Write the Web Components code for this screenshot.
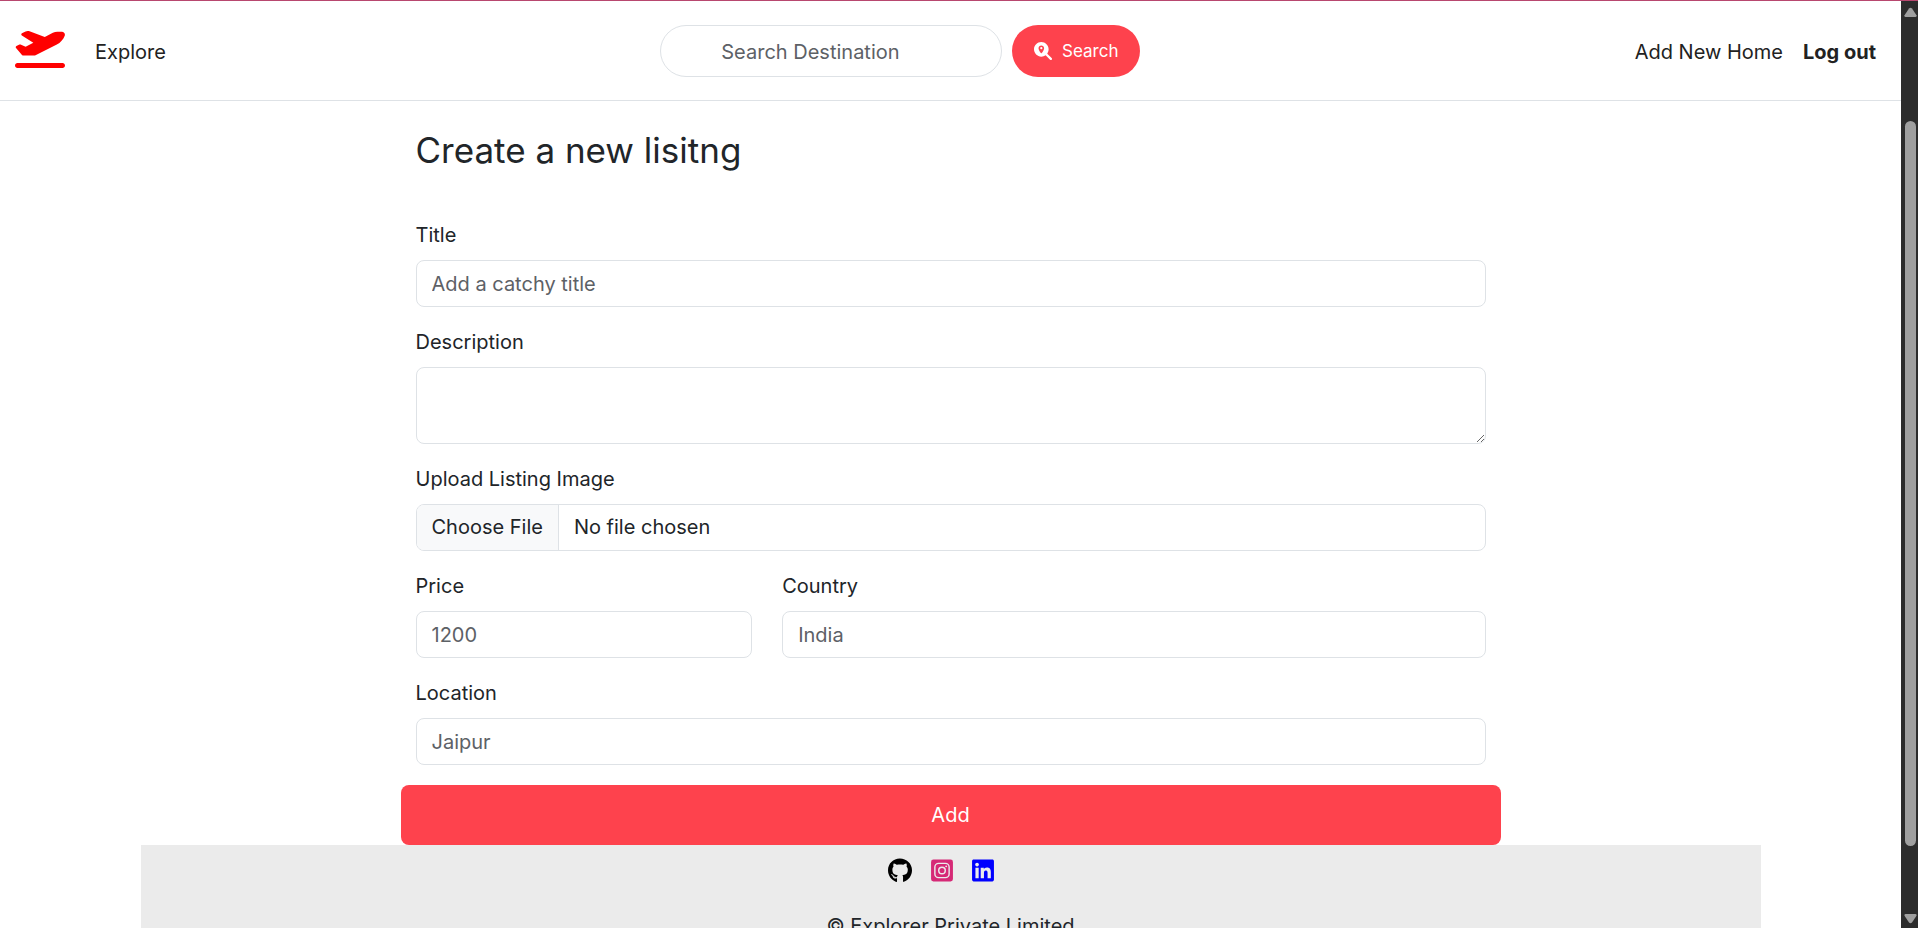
<!DOCTYPE html>
<html lang="en">
<head>
<meta charset="utf-8">
<meta name="viewport" content="width=device-width, initial-scale=1">
<title>Create a new listing</title>
<style>
  html, body { margin: 0; height: 100%; }
  body {
    overflow: hidden;
    background: #fff;
    color: #212529;
    font: 400 20px/30px Inter, "Open Sans", sans-serif;
    --accent: #fe424d;
    --line: #dee2e6;
    --muted: #5d6166;
  }
</style>
</head>
<body>
<app-shell>
  <site-nav slot="top"></site-nav>
  <listing-form>
    <form-field label="Title" placeholder="Add a catchy title"></form-field>
    <form-field label="Description" kind="textarea"></form-field>
    <form-field label="Upload Listing Image" kind="file"></form-field>
    <form-field class="third" label="Price" placeholder="1200"></form-field>
    <form-field class="rest" label="Country" placeholder="India"></form-field>
    <form-field label="Location" placeholder="Jaipur"></form-field>
  </listing-form>
  <site-footer></site-footer>
</app-shell>

<template id="shell-tpl">
  <style>
    :host { display: flex; flex-direction: column; height: 100vh; border-top: 1px solid #b8476f; box-sizing: border-box; }
    .row { flex: 1; min-height: 0; display: flex; }
    .page { flex: 1; min-width: 0; overflow: hidden; }
  </style>
  <div class="row">
    <div class="page"><slot name="top"></slot><main><slot></slot></main></div>
    <scroll-rail></scroll-rail>
  </div>
</template>

<template id="rail-tpl">
  <style>
    :host { display: flex; flex-direction: column; align-items: center; flex: none; width: 17px; background: #2c2c2c; box-sizing: border-box; padding: 6px 0 4px 2px; }
    svg { display: block; width: 13px; height: 10px; fill: #9f9f9f; flex: none; }
    .track { flex: 1; display: flex; flex-direction: column; padding: 104px 0 68px; }
    .thumb { flex: 1; width: 11px; border-radius: 6px; background: #9f9f9f; }
  </style>
  <svg viewBox="0 0 13 10" aria-hidden="true"><path d="M5 1.6Q6.500 0 8 1.600L12.500 8.200Q13 10 11.500 10H1.500Q0 10 .5 8.200Z"/></svg>
  <div class="track"><div class="thumb"></div></div>
  <svg viewBox="0 0 13 10" aria-hidden="true"><path d="M5 8.400Q6.500 10 8 8.400L12.500 1.800Q13 0 11.500 0H1.500Q0 0 .5 1.800Z"/></svg>
</template>

<template id="nav-tpl">
  <style>
    :host { display: block; border-bottom: 1px solid var(--line); }
    nav { display: flex; align-items: center; justify-content: space-between; height: 99px; padding: 0 15px; box-sizing: border-box; }
    .group { display: flex; align-items: center; }
    a { color: #222; text-decoration: none; padding: 2px 10px 0; white-space: nowrap; }
    .logo { padding: 0; margin-right: 20px; }
    .logo svg { display: block; width: 50px; height: 40px; fill: red; margin-bottom: 5px; }
    .strong { font-weight: 700; }
    form { display: flex; gap: 10px; margin: 0; }
    input { box-sizing: border-box; width: 342px; height: 52px; padding: 2px 15px 0 60px; border: 1px solid var(--line); border-radius: 26px; font: inherit; color: inherit; background: #fff; outline: 0; }
    input::placeholder { color: var(--muted); opacity: 1; }
    button { display: flex; align-items: center; justify-content: center; gap: 10px; width: 128px; height: 52px; padding: 0; border: 0; border-radius: 26px; background: var(--accent); color: #fff; font: inherit; font-size: 17px; }
    button svg { width: 18px; height: 18px; fill: #fff; }
  </style>
  <nav>
    <div class="group">
      <a class="logo" href="#" aria-label="Home"><svg viewBox="0 0 640 512"><path d="M381 114.900L186.100 41.800c-16.700-6.200-35.200-5.300-51.100 2.700L89.100 67.400C78 73 77.200 88.500 87.600 95.200l146.900 94.500L136 240 77.800 214.100c-8.700-3.900-18.800-3.700-27.300.6L18.300 230.800c-9.300 4.700-11.800 16.800-5 24.700l73.100 85.300c6.100 7.100 15 11.200 24.300 11.200H248.400c5 0 9.900-1.200 14.300-3.400L535.600 212.200c46.500-23.300 82.500-63.300 100.800-112C645.900 75 627.200 48 600.200 48H542.800c-20.200 0-40.200 4.800-58.200 14L381 114.900zM0 480c0 17.700 14.300 32 32 32H608c17.700 0 32-14.300 32-32s-14.300-32-32-32H32c-17.700 0-32 14.300-32 32z"/></svg></a>
      <a href="#">Explore</a>
    </div>
    <form>
      <input type="text" aria-label="Search Destination" placeholder="Search Destination">
      <button type="button"><svg viewBox="0 0 512 512" aria-hidden="true"><path d="M416 208c0 45.900-14.900 88.300-40 122.700L502.600 457.400c12.500 12.500 12.500 32.800 0 45.300s-32.800 12.500-45.300 0L330.700 376c-34.400 25.200-76.800 40-122.700 40C93.100 416 0 322.900 0 208S93.100 0 208 0S416 93.100 416 208zM288 176c0-44.200-35.800-80-80-80s-80 35.800-80 80c0 48.800 46.500 111.600 68.600 138.600c6 7.300 16.800 7.300 22.700 0c22.100-27 68.600-89.800 68.600-138.600zm-112 0a32 32 0 1 1 64 0 32 32 0 1 1 -64 0z"/></svg>Search</button>
    </form>
    <div class="group">
      <a href="#">Add New Home</a>
      <a class="strong" href="#">Log out</a>
    </div>
  </nav>
</template>

<template id="form-tpl">
  <style>
    :host { display: block; max-width: 1100px; margin: 0 auto; }
    h1 { margin: 0; padding: 25px 15px 46px; font-size: 35px; line-height: 48px; font-weight: 400; }
    form { margin: 0; }
    .fields { display: grid; grid-template-columns: repeat(12, minmax(0, 1fr)); gap: 20px 30px; padding: 0 15px 20px; }
    ::slotted(form-field) { grid-column: span 12; }
    ::slotted(.third) { grid-column: span 4; }
    ::slotted(.rest) { grid-column: span 8; }
    button { display: block; width: 100%; height: 60px; border: 0; border-radius: 8px; background: var(--accent); color: #fff; font: inherit; }
  </style>
  <h1>Create a new lisitng</h1>
  <form>
    <div class="fields"><slot></slot></div>
    <button type="button">Add</button>
  </form>
</template>

<template id="field-tpl">
  <style>
    :host { display: flex; flex-direction: column; gap: 10px; }
    label { align-self: flex-start; }
    input, textarea { display: block; box-sizing: border-box; width: 100%; height: 47px; margin: 0; padding: 0 15px; border: 1px solid var(--line); border-radius: 8px; background: #fff; color: inherit; font: inherit; outline: 0; }
    textarea { height: 77px; padding: 7px 15px; resize: vertical; }
    ::placeholder { color: var(--muted); opacity: 1; }
    input[type=file] { overflow: hidden; line-height: 45px; }
    ::file-selector-button { height: 45px; margin: 0 15px 0 -15px; padding: 0 15px; border: 0 solid var(--line); border-right-width: 1px; background: #f8f9fa; color: inherit; font: inherit; }
  </style>
  <label for="control"></label>
</template>

<template id="footer-tpl">
  <style>
    :host { display: flex; flex-direction: column; align-items: center; gap: 28px; box-sizing: border-box; width: calc(100% - 30px); max-width: 1620px; margin: 0 auto; padding: 13px 0 40px; background: #ebebeb; }
    .icons { display: flex; gap: 19px; padding-right: 20px; }
    a { display: block; height: 25px; }
    svg { display: block; height: 25px; width: 22px; }
    .gh svg { width: 24px; }
  </style>
  <div class="icons">
    <a class="gh" href="#" aria-label="GitHub"><svg viewBox="0 0 496 512"><path d="M165.900 397.400c0 2-2.300 3.600-5.200 3.600-3.300.3-5.600-1.300-5.600-3.600 0-2 2.300-3.600 5.200-3.600 3-.3 5.600 1.300 5.600 3.600zm-31.100-4.500c-.7 2 1.300 4.300 4.300 4.900 2.600 1 5.600 0 6.200-2s-1.300-4.300-4.300-5.200c-2.600-.7-5.500.3-6.200 2.300zm44.200-1.700c-2.900.7-4.900 2.600-4.600 4.900.3 2 2.900 3.300 5.900 2.600 2.900-.7 4.900-2.600 4.600-4.600-.3-1.900-3-3.200-5.900-2.900zM244.800 8C106.100 8 0 113.300 0 252c0 110.900 69.800 205.800 169.500 239.200 12.800 2.300 17.300-5.600 17.300-12.100 0-6.200-.3-40.400-.3-61.400 0 0-70 15-84.700-29.800 0 0-11.400-29.100-27.800-36.600 0 0-22.900-15.700 1.600-15.400 0 0 24.900 2 38.600 25.800 21.900 38.600 58.600 27.500 72.900 20.900 2.300-16 8.800-27.100 16-33.700-55.900-6.200-112.300-14.300-112.300-110.500 0-27.500 7.600-41.300 23.600-58.900-2.600-6.500-11.100-33.300 2.600-67.900 20.900-6.500 69 27 69 27 20-5.600 41.500-8.500 62.800-8.500s42.800 2.900 62.800 8.500c0 0 48.100-33.600 69-27 13.700 34.700 5.200 61.400 2.600 67.900 16 17.700 25.800 31.500 25.800 58.900 0 96.500-58.900 104.200-114.800 110.500 9.200 7.900 17 22.900 17 46.400 0 33.700-.3 75.400-.3 83.600 0 6.500 4.600 14.400 17.300 12.100C428.200 457.800 496 362.900 496 252 496 113.300 383.500 8 244.800 8zM97.200 352.900c-1.300 1-1 3.300.7 5.200 1.600 1.600 3.900 2.300 5.200 1 1.300-1 1-3.300-.7-5.200-1.600-1.600-3.900-2.300-5.200-1zm-10.800-8.100c-.7 1.300.3 2.900 2.300 3.900 1.600 1 3.600.7 4.300-.7.7-1.300-.3-2.900-2.300-3.900-2-.6-3.600-.3-4.300.7zm32.400 35.600c-1.600 1.300-1 4.300 1.300 6.200 2.300 2.300 5.200 2.600 6.500 1 1.300-1.300.7-4.300-1.300-6.200-2.200-2.300-5.200-2.600-6.500-1zm-11.400-14.700c-1.600 1-1.600 3.600 0 5.900 1.600 2.300 4.300 3.300 5.600 2.300 1.600-1.300 1.600-3.900 0-6.200-1.400-2.300-4-3.300-5.600-2z"/></svg></a>
    <a href="#" aria-label="Instagram"><svg viewBox="0 0 448 512"><rect y="32" width="448" height="448" rx="48" fill="#d62976"/><rect x="78" y="110" width="292" height="292" rx="76" fill="none" stroke="#ebebeb" stroke-width="29"/><circle cx="224" cy="256" r="67" fill="none" stroke="#ebebeb" stroke-width="30"/><circle cx="309" cy="171" r="19" fill="#ebebeb"/></svg></a>
    <a href="#" aria-label="LinkedIn"><svg viewBox="0 0 448 512"><path fill="#00f" d="M416 32H31.900C14.300 32 0 46.500 0 64.300v383.400C0 465.500 14.300 480 31.900 480H416c17.600 0 32-14.500 32-32.300V64.300c0-17.800-14.400-32.300-32-32.300zM135.400 416H69V202.200h66.500V416zm-33.200-243c-21.300 0-38.500-17.300-38.500-38.500S80.900 96 102.200 96c21.200 0 38.500 17.300 38.500 38.500 0 21.300-17.200 38.500-38.500 38.500zm282.100 243h-66.400V312c0-24.800-.5-56.700-34.500-56.700-34.600 0-39.900 27-39.900 54.900V416h-66.400V202.200h63.700v29.200h.9c8.900-16.800 30.600-34.500 62.900-34.500 67.200 0 79.700 44.300 79.700 101.900V416z"/></svg></a>
  </div>
  <div>© Explorer Private Limited</div>
</template>

<script>
  class TemplateElement extends HTMLElement {
    constructor() {
      super();
      const tpl = document.getElementById(this.constructor.template);
      this.attachShadow({ mode: 'open' }).append(tpl.content.cloneNode(true));
    }
  }

  customElements.define('scroll-rail', class extends TemplateElement { static template = 'rail-tpl'; });
  customElements.define('app-shell', class extends TemplateElement { static template = 'shell-tpl'; });
  customElements.define('site-nav', class extends TemplateElement { static template = 'nav-tpl'; });
  customElements.define('listing-form', class extends TemplateElement { static template = 'form-tpl'; });
  customElements.define('site-footer', class extends TemplateElement { static template = 'footer-tpl'; });

  // A labelled control; kind is "text" (default), "textarea" or "file".
  customElements.define('form-field', class extends TemplateElement {
    static template = 'field-tpl';
    connectedCallback() {
      if (this.control) return;
      const kind = this.getAttribute('kind') || 'text';
      this.control = document.createElement(kind === 'textarea' ? 'textarea' : 'input');
      if (kind !== 'textarea') this.control.type = kind;
      this.control.id = 'control';
      if (this.hasAttribute('placeholder')) this.control.placeholder = this.getAttribute('placeholder');
      this.shadowRoot.querySelector('label').textContent = this.getAttribute('label');
      this.shadowRoot.append(this.control);
    }
  });
</script>
</body>
</html>
